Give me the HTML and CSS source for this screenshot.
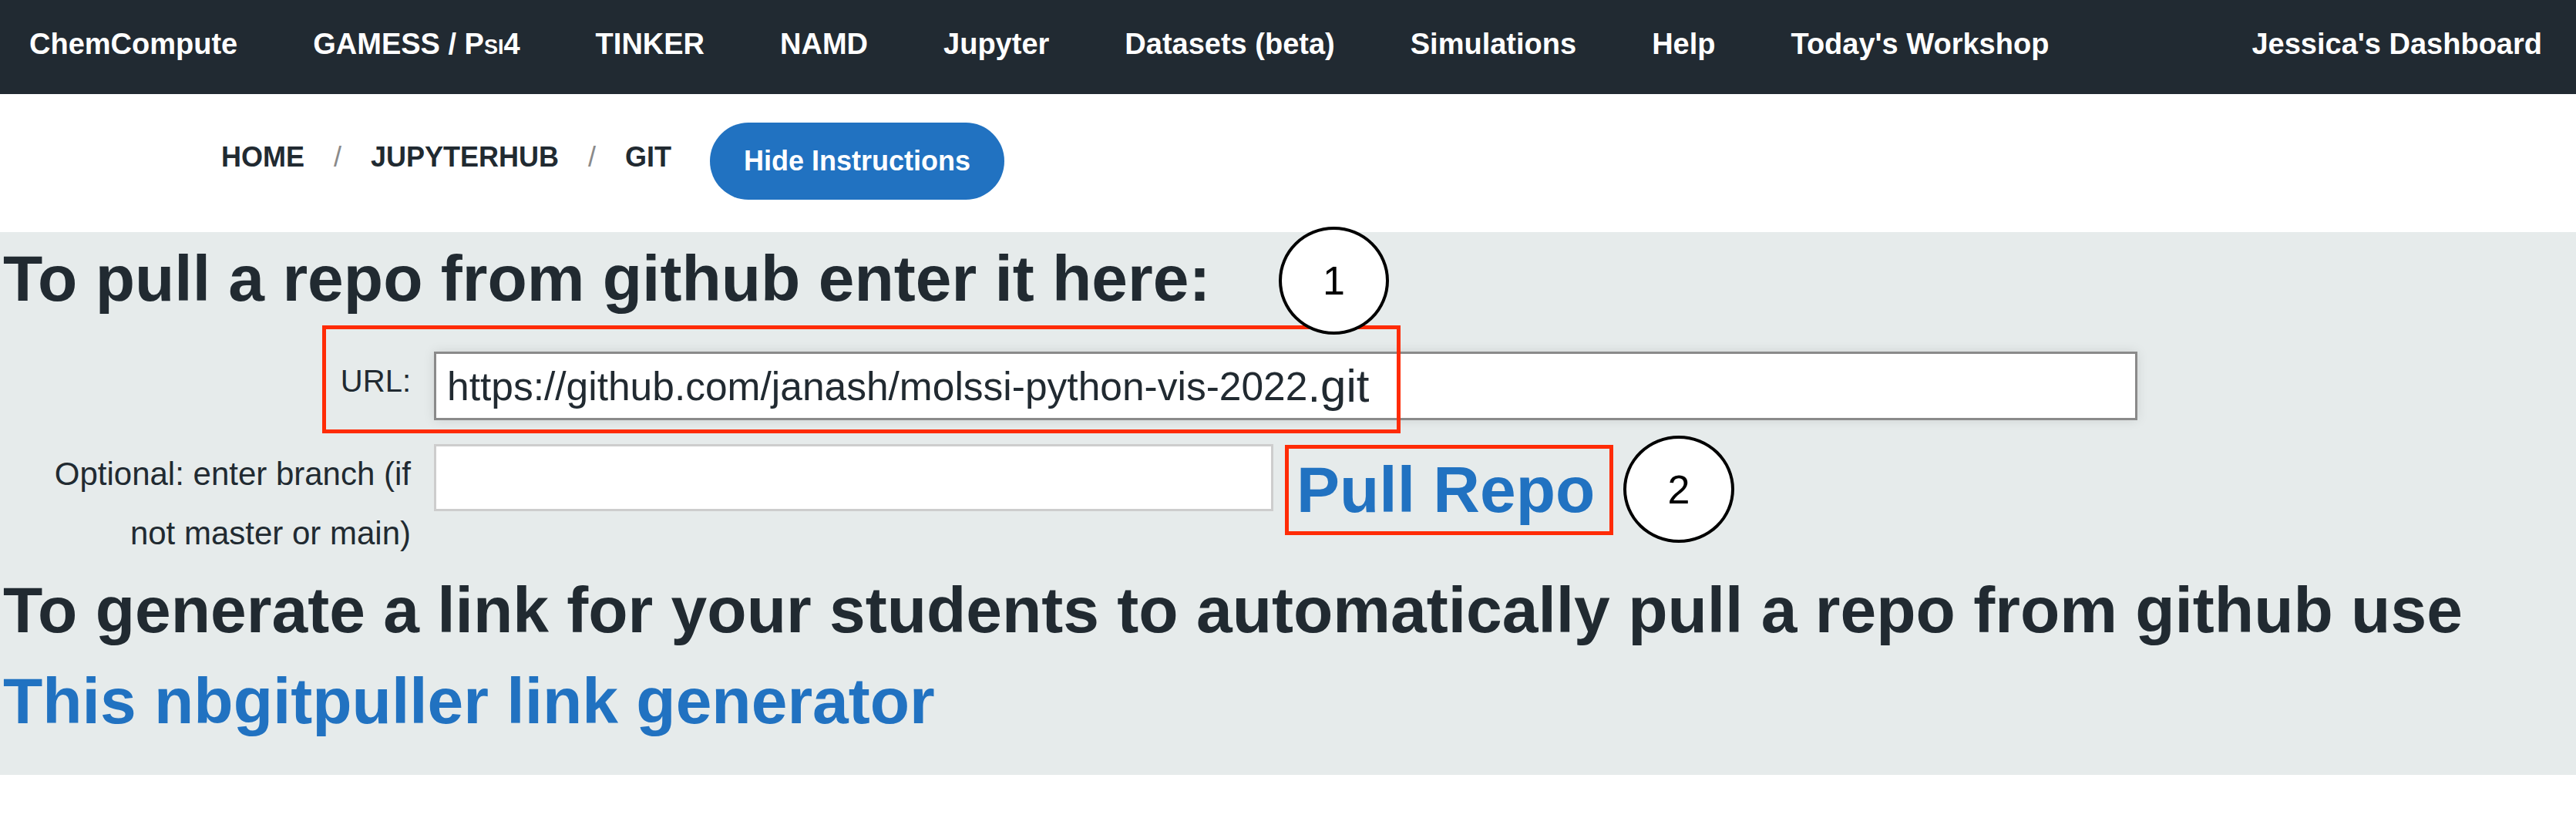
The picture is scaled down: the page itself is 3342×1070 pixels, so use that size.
FILE: index.html
```html
<!DOCTYPE html>
<html lang="en">
<head>
<meta charset="utf-8">
<title>ChemCompute - Git</title>
<link rel="stylesheet" href="styles.css">
</head>
<body>
<nav class="topnav">
  <a class="nav-item" href="#">ChemCompute</a>
  <a class="nav-item" href="#">GAMESS / P<span class="sc">si</span>4</a>
  <a class="nav-item" href="#">TINKER</a>
  <a class="nav-item" href="#">NAMD</a>
  <a class="nav-item" href="#">Jupyter</a>
  <a class="nav-item" href="#">Datasets (beta)</a>
  <a class="nav-item" href="#">Simulations</a>
  <a class="nav-item" href="#">Help</a>
  <a class="nav-item" href="#">Today's Workshop</a>
  <a class="nav-item nav-right" href="#">Jessica's Dashboard</a>
</nav>
<header class="crumbbar">
  <ol class="crumbs">
    <li class="crumb">HOME</li>
    <li class="sep">/</li>
    <li class="crumb">JUPYTERHUB</li>
    <li class="sep">/</li>
    <li class="crumb">GIT</li>
  </ol>
  <button class="pill" type="button">Hide Instructions</button>
</header>
<main class="panel">
  <h1 class="title">To pull a repo from github enter it here:</h1>
  <div class="gitform">
    <div class="lbl">URL:</div>
    <div class="field url-field">https://github.com/janash/molssi-python-vis-2022<span class="git">.git</span></div>
    <div class="lbl lbl-branch">Optional: enter branch (if<br>not master or main)</div>
    <div class="branch-cell">
      <div class="field branch-field"></div>
      <a class="pull" href="#">Pull Repo</a>
    </div>
  </div>
  <h1 class="title">To generate a link for your students to automatically pull a repo from github use<br><a class="gen-link" href="#">This nbgitpuller link generator</a></h1>

  <div class="redbox box-url"></div>
  <div class="badge badge-1">1</div>
  <div class="redbox box-pull"></div>
  <div class="badge badge-2">2</div>
</main>
</body>
</html>
```

FILE: styles.css
```css
* { box-sizing: border-box; }

html, body {
  margin: 0;
  padding: 0;
  background: #ffffff;
  font-family: "Liberation Sans", Arial, Helvetica, sans-serif;
  color: #212a31;
}

/* ---------- top navigation ---------- */
.topnav {
  display: flex;
  align-items: center;
  height: 122px;
  padding: 0 44px 8px 38px;
  background: #212a32;
  gap: 98px;
}
.nav-item {
  color: #ffffff;
  text-decoration: none;
  font-weight: bold;
  font-size: 38px;
  line-height: 46px;
  white-space: nowrap;
}
.sc { font-variant: small-caps; }
.nav-right { margin-left: auto; }

/* ---------- breadcrumb bar ---------- */
.crumbbar {
  display: flex;
  align-items: flex-start;
  height: 179px;
  padding: 37px 0 0 287px;
  gap: 50px;
}
.crumbs {
  display: flex;
  list-style: none;
  margin: 20px 0 0 0;
  padding: 0;
  font-size: 36px;
  line-height: 50px;
}
.crumb {
  font-weight: bold;
  color: #212a31;
}
.sep {
  color: #8a8a8a;
  padding: 0 38px;
}
.pill {
  height: 100px;
  padding: 0 44px;
  border: none;
  border-radius: 50px;
  background: #2172c1;
  color: #ffffff;
  font-family: "Liberation Sans", Arial, Helvetica, sans-serif;
  font-weight: bold;
  font-size: 36px;
  line-height: 100px;
}

/* ---------- gray panel ---------- */
.panel {
  position: relative;
  background: #e6ebeb;
  padding: 1px 0 37px 4px;
}
.title {
  margin: 0;
  font-size: 84px;
  font-weight: bold;
  line-height: 118px;
  color: #212a31;
  white-space: nowrap;
}
.gen-link {
  color: #2172c1;
  text-decoration: none;
}

.gitform {
  display: grid;
  grid-template-columns: 529px 2210px;
  column-gap: 30px;
  row-gap: 31px;
  margin: 36px 0 2px 0;
  align-items: start;
}
.lbl {
  text-align: right;
  font-size: 40px;
  line-height: 77px;
  color: #212a31;
}
.lbl-branch { font-size: 42px; }
.field {
  display: flex;
  align-items: center;
  background: #ffffff;
  padding-left: 14px;
  white-space: nowrap;
  color: #212a31;
}
.url-field {
  height: 89px;
  border: 3px solid #8a8a8a;
  box-shadow: 0 0 14px rgba(0, 0, 0, 0.10);
  font-size: 51.5px;
}
.git { font-size: 60px; }

.branch-cell {
  display: flex;
  align-items: flex-start;
  gap: 30px;
}
.branch-field {
  width: 1089px;
  height: 87px;
  border: 3px solid #cdcdcd;
}
.pull {
  color: #2172c1;
  text-decoration: none;
  font-weight: bold;
  font-size: 84px;
  line-height: 118px;
  white-space: nowrap;
}

/* ---------- annotation overlays ---------- */
.redbox {
  position: absolute;
  border: 5px solid #ff2b06;
}
.box-url {
  left: 418px;
  top: 121px;
  width: 1399px;
  height: 140px;
}
.box-pull {
  left: 1667px;
  top: 276px;
  width: 426px;
  height: 117px;
}
.badge {
  position: absolute;
  display: flex;
  align-items: center;
  justify-content: center;
  border: 4px solid #000000;
  border-radius: 50%;
  background: #ffffff;
  color: #000000;
  font-size: 52px;
  font-family: "Liberation Sans", Arial, Helvetica, sans-serif;
}
.badge-1 {
  left: 1659px;
  top: -7px;
  width: 143px;
  height: 140px;
}
.badge-2 {
  left: 2106px;
  top: 264px;
  width: 144px;
  height: 139px;
}
```
